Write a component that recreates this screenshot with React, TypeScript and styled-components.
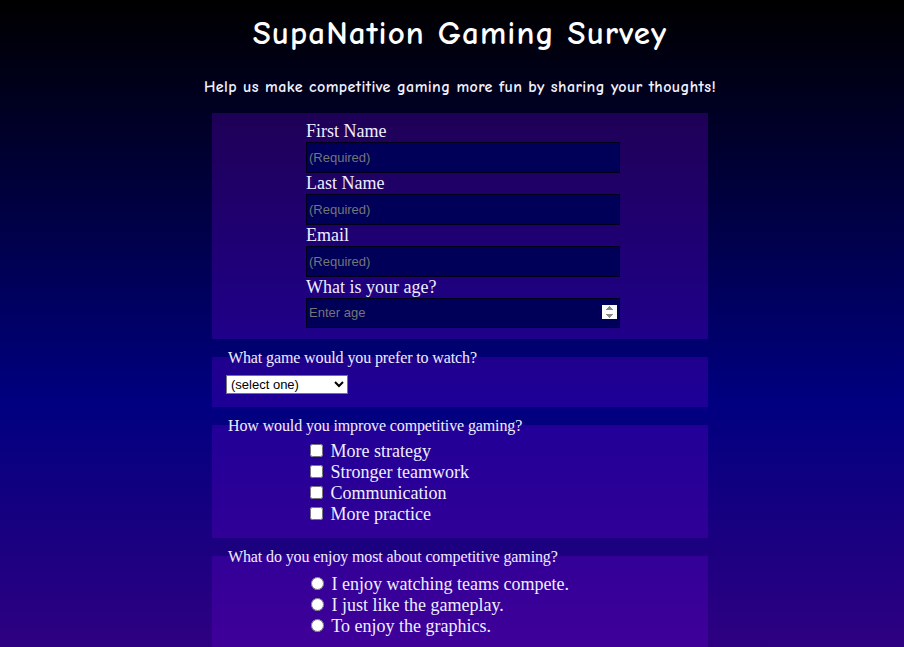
import styled, { createGlobalStyle } from "styled-components";

const GlobalStyle = createGlobalStyle`
  html, body {
    margin: 0;
    padding: 0;
  }
  body {
    min-height: 800px;
    background: linear-gradient(#000000 0px, #000080 400px, #4b0082 800px);
    background-repeat: no-repeat;
    background-color: #4b0082;
    color: #eeeeff;
    font-family: "Liberation Serif", "Times New Roman", serif;
  }
`;

const Page = styled.div`
  padding: 15px 0 40px 16px;
`;

const Title = styled.h1`
  margin: 0;
  text-align: center;
  font-family: "Comic Sans MS", "Comic Neue", "Liberation Sans", sans-serif;
  font-size: 33px;
  font-weight: bold;
  letter-spacing: 1.1px;
  line-height: 37px;
  color: #ffffff;
`;

const Subtitle = styled.p`
  margin: 26px 0 17px;
  text-align: center;
  font-family: "Comic Sans MS", "Comic Neue", "Liberation Sans", sans-serif;
  font-size: 16px;
  font-weight: 600;
  letter-spacing: 0.4px;
  line-height: 18px;
  color: #f2f2ff;
`;

const Form = styled.form`
  width: 496px;
  margin: 0 auto;
`;

const Section = styled.fieldset<{ $bottom?: number }>`
  box-sizing: border-box;
  width: 496px;
  margin: 0 0 10px;
  padding: 5.6px 12px ${(p) => p.$bottom ?? 10}px;
  border: 2px solid transparent;
  background: rgba(102, 0, 204, 0.3);
`;

const Legend = styled.legend`
  padding: 0 2px;
  font-size: 16px;
  letter-spacing: -0.12px;
  color: #eeeeff;
`;

const Column = styled.div<{ $shift?: number }>`
  width: 314px;
  margin-left: 80px;
  padding-top: ${(p) => p.$shift ?? 0}px;
`;

const FieldLabel = styled.label`
  display: block;
  font-size: 18px;
  line-height: 21px;
  color: #eeeeff;
`;

const TextInput = styled.input<{ $tall?: number }>`
  display: block;
  box-sizing: border-box;
  width: 100%;
  height: ${(p) => p.$tall ?? 31}px;
  margin: 0;
  padding: 1px 2px;
  background: #000058;
  border: 1px solid #000018;
  color: #ffffff;
  font-family: "Liberation Sans", Arial, sans-serif;
  font-size: 13px;
  outline: none;

  &::placeholder {
    color: #757575;
  }

  &::-webkit-inner-spin-button {
    opacity: 1;
  }
`;

const Select = styled.select`
  display: block;
  width: 122px;
  height: 19px;
  margin: 3px 0 1px;
  font-family: "Liberation Sans", Arial, sans-serif;
  font-size: 13px;
  background: #ffffff;
  color: #000000;
`;

const Choice = styled.label`
  display: block;
  font-size: 18px;
  line-height: 21px;
  color: #eeeeff;
`;

const improvements = [
  "More strategy",
  "Stronger teamwork",
  "Communication",
  "More practice",
];

const enjoyments = [
  "I enjoy watching teams compete.",
  "I just like the gameplay.",
  "To enjoy the graphics.",
];

export default function App() {
  return (
    <>
      <GlobalStyle />
      <Page>
        <Title>SupaNation Gaming Survey</Title>
        <Subtitle>
          Help us make competitive gaming more fun by sharing your thoughts!
        </Subtitle>
        <Form onSubmit={(e) => e.preventDefault()}>
          <Section $bottom={9}>
            <Column>
              <FieldLabel htmlFor="first-name">First Name</FieldLabel>
              <TextInput id="first-name" type="text" placeholder="(Required)" required />
              <FieldLabel htmlFor="last-name">Last Name</FieldLabel>
              <TextInput id="last-name" type="text" placeholder="(Required)" required />
              <FieldLabel htmlFor="email">Email</FieldLabel>
              <TextInput id="email" type="email" placeholder="(Required)" required />
              <FieldLabel htmlFor="age">What is your age?</FieldLabel>
              <TextInput
                id="age"
                type="number"
                placeholder="Enter age"
                min={1}
                max={120}
                $tall={30}
              />
            </Column>
          </Section>

          <Section>
            <Legend>What game would you prefer to watch?</Legend>
            <Select defaultValue="">
              <option value="">(select one)</option>
              <option value="lol">League of Legends</option>
              <option value="ow">Overwatch</option>
              <option value="csgo">CS:GO</option>
            </Select>
          </Section>

          <Section $bottom={11}>
            <Legend>How would you improve competitive gaming?</Legend>
            <Column>
              {improvements.map((item) => (
                <Choice key={item}>
                  <input type="checkbox" name="improve" value={item} /> {item}
                </Choice>
              ))}
            </Column>
          </Section>

          <Section>
            <Legend>What do you enjoy most about competitive gaming?</Legend>
            <Column $shift={3}>
              {enjoyments.map((item) => (
                <Choice key={item}>
                  <input type="radio" name="enjoy" value={item} /> {item}
                </Choice>
              ))}
            </Column>
          </Section>
        </Form>
      </Page>
    </>
  );
}
